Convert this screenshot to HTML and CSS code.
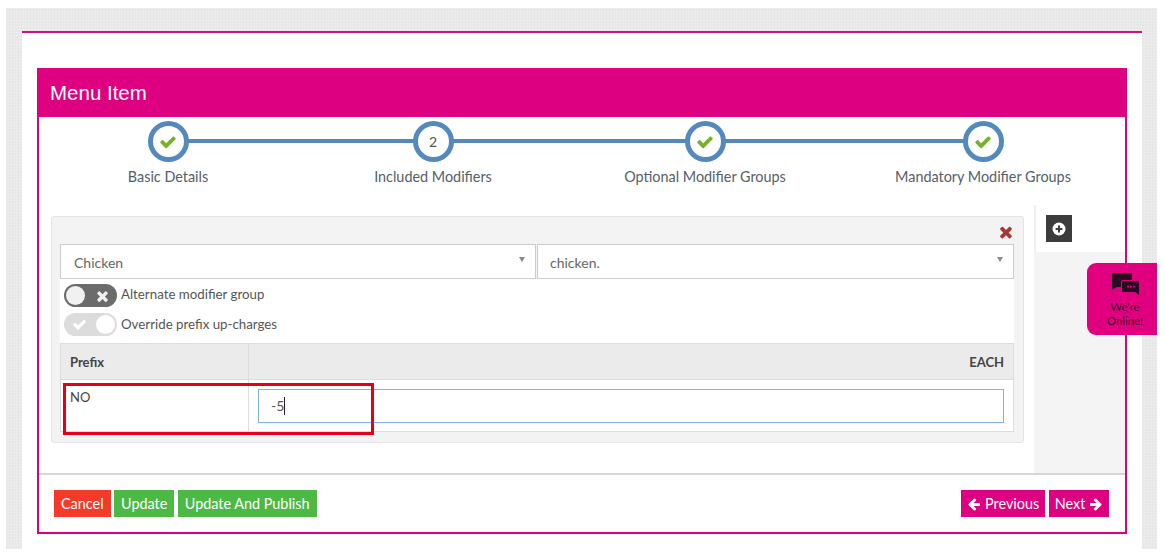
FILE: index.html
```html
<!DOCTYPE html>
<html lang="en">
<head>
<meta charset="utf-8">
<title>Menu Item</title>
<link rel="stylesheet" href="styles.css">
</head>
<body>
<div class="page">
  <div class="sheet">
    <section class="panel">
      <h1 class="panel-title">Menu Item</h1>
      <div class="stepper">
        <div class="step-line"></div>
        <div class="step">
          <div class="step-circle"><svg class="check" viewBox="0 0 1792 1792"><path d="M1671 566q0 40-28 68l-724 724-136 136q-28 28-68 28t-68-28l-136-136-362-362q-28-28-28-68t28-68l136-136q28-28 68-28t68 28l294 295 656-657q28-28 68-28t68 28l136 136q28 28 28 68z"/></svg></div>
          <div class="step-label">Basic Details</div>
        </div>
        <div class="step">
          <div class="step-circle">2</div>
          <div class="step-label">Included Modifiers</div>
        </div>
        <div class="step">
          <div class="step-circle"><svg class="check" viewBox="0 0 1792 1792"><path d="M1671 566q0 40-28 68l-724 724-136 136q-28 28-68 28t-68-28l-136-136-362-362q-28-28-28-68t28-68l136-136q28-28 68-28t68 28l294 295 656-657q28-28 68-28t68 28l136 136q28 28 28 68z"/></svg></div>
          <div class="step-label">Optional Modifier Groups</div>
        </div>
        <div class="step">
          <div class="step-circle"><svg class="check" viewBox="0 0 1792 1792"><path d="M1671 566q0 40-28 68l-724 724-136 136q-28 28-68 28t-68-28l-136-136-362-362q-28-28-28-68t28-68l136-136q28-28 68-28t68 28l294 295 656-657q28-28 68-28t68 28l136 136q28 28 28 68z"/></svg></div>
          <div class="step-label">Mandatory Modifier Groups</div>
        </div>
      </div>

      <div class="main">
        <div class="main-left">
          <div class="card">
            <div class="card-top">
              <svg class="close" viewBox="0 0 1408 1792"><path d="M1298 1322q0 40-28 68l-136 136q-28 28-68 28t-68-28l-294-294-294 294q-28 28-68 28t-68-28l-136-136q-28-28-28-68t28-68l294-294-294-294q-28-28-28-68t28-68l136-136q28-28 68-28t68 28l294 294 294-294q28-28 68-28t68 28l136 136q28 28 28 68t-28 68l-294 294 294 294q28 28 28 68z"/></svg>
            </div>
            <div class="selects">
              <div class="select select-first">Chicken<span class="caret-down"></span></div>
              <div class="select select-second">chicken.<span class="caret-down"></span></div>
            </div>
            <div class="card-body">
              <div class="toggle-row">
                <div class="toggle toggle-off">
                  <span class="knob"></span>
                  <svg class="toggle-x" viewBox="0 0 1408 1792"><path d="M1298 1322q0 40-28 68l-136 136q-28 28-68 28t-68-28l-294-294-294 294q-28 28-68 28t-68-28l-136-136q-28-28-28-68t28-68l294-294-294-294q-28-28-28-68t28-68l136-136q28-28 68-28t68 28l294 294 294-294q28-28 68-28t68 28l136 136q28 28 28 68t-28 68l-294 294 294 294q28 28 28 68z"/></svg>
                </div>
                <span class="toggle-label">Alternate modifier group</span>
              </div>
              <div class="toggle-row">
                <div class="toggle toggle-on">
                  <svg class="toggle-check" viewBox="0 0 1792 1792"><path d="M1671 566q0 40-28 68l-724 724-136 136q-28 28-68 28t-68-28l-136-136-362-362q-28-28-28-68t28-68l136-136q28-28 68-28t68 28l294 295 656-657q28-28 68-28t68 28l136 136q28 28 28 68z"/></svg>
                  <span class="knob"></span>
                </div>
                <span class="toggle-label">Override prefix up-charges</span>
              </div>
              <div class="table">
                <div class="th th-prefix">Prefix</div>
                <div class="th th-each">EACH</div>
                <div class="td td-prefix">NO</div>
                <div class="td td-value">
                  <div class="value-input">-5<span class="text-caret"></span></div>
                </div>
                <div class="annotation"></div>
              </div>
            </div>
          </div>
        </div>
        <aside class="side">
          <div class="side-top">
            <button class="add-btn" type="button" aria-label="Add">
              <svg viewBox="0 0 14 14"><circle cx="7" cy="7" r="6.5" fill="#fff"/><path d="M7 3.6v6.8M3.6 7h6.8" stroke="#3c3c3c" stroke-width="2"/></svg>
            </button>
          </div>
          <div class="side-fill"></div>
        </aside>
      </div>

      <div class="footer">
        <div class="btn-group">
          <button class="btn btn-red" type="button">Cancel</button>
          <button class="btn btn-green" type="button">Update</button>
          <button class="btn btn-green" type="button">Update And Publish</button>
        </div>
        <div class="btn-group">
          <button class="btn btn-pink" type="button"><svg class="arrow" viewBox="0 0 1792 1792"><path d="M1664 896v128q0 53-32.5 90.5t-84.5 37.5h-704l293 294q38 36 38 90t-38 90l-75 76q-37 37-90 37-52 0-91-37l-651-652q-37-37-37-90 0-52 37-91l651-650q38-38 91-38 52 0 90 38l75 74q38 38 38 91t-38 91l-293 293h704q52 0 84.5 37.5t32.5 90.5z"/></svg> Previous</button>
          <button class="btn btn-pink" type="button">Next <svg class="arrow" viewBox="0 0 1792 1792"><path d="M1600 960q0 54-37 91l-651 651q-39 37-91 37-51 0-90-37l-75-75q-38-38-38-91t38-91l293-293h-704q-52 0-84.5-37.5t-32.5-90.5v-128q0-53 32.5-90.5t84.5-37.5h704l-293-294q-38-36-38-90t38-90l75-75q38-38 90-38 53 0 91 38l651 651q37 35 37 90z"/></svg></button>
        </div>
      </div>
    </section>
  </div>
  <div class="chat">
    <svg class="chat-icon" viewBox="0 0 27 22"><path d="M1 0h18a1 1 0 0 1 1 1v6h-9a2 2 0 0 0-2 2v5H5l-5 3V1a1 1 0 0 1 1-1z" fill="#2b0b22"/><path d="M11 8h15a1 1 0 0 1 1 1v13l-4-3H11a1 1 0 0 1-1-1V9a1 1 0 0 1 1-1z" fill="#2b0b22"/><path d="M15 13.5h2M18 13.5h2M21 13.5h2" stroke="#e0007f" stroke-width="1.4"/></svg>
    <div class="chat-text">We're<br>Online!</div>
  </div>
</div>
</body>
</html>
```

FILE: styles.css
```css
* { box-sizing: border-box; }
html, body { margin: 0; padding: 0; background: #fff; }
body { font-family: Lato, "Liberation Sans", sans-serif; color: #555; overflow: hidden; height: 557px; }

.page {
  position: relative;
  margin: 8px 0 0 6px;
  width: 1151px;
  height: 541px;
  padding: 23px 15px 0 16px;
  background-color: #e9e9e9;
  background-image:
    repeating-linear-gradient(0deg, rgba(255,255,255,.2) 0 1px, transparent 1px 3px),
    repeating-linear-gradient(90deg, rgba(0,0,0,.015) 0 1px, transparent 1px 3px);
}
.sheet {
  height: 526px;
  background: #fff;
  border-top: 2px solid #d0107f;
  padding: 35px 15px 0;
}
.panel {
  height: 466px;
  border: 2px solid #e0007f;
  display: flex;
  flex-direction: column;
}
.panel-title {
  margin: -2px -2px 0;
  height: 49px;
  padding: 1px 0 0 13px;
  background: #dd0080;
  color: #fff;
  font: 400 20.5px/47px "Liberation Sans", Arial, sans-serif;
  flex: none;
}

.stepper {
  position: relative;
  flex: none;
  height: 88px;
  padding-top: 4px;
  display: grid;
  grid-template-columns: 258px 272px 272px 284px;
  align-items: start;
}
.step-line {
  position: absolute;
  left: 129px;
  top: 22px;
  width: 814px;
  height: 4px;
  background: #5389bd;
}
.step { position: relative; display: flex; flex-direction: column; align-items: center; }
.step-circle {
  width: 41px;
  height: 41px;
  border: 5px solid #5389bd;
  border-radius: 50%;
  background: #fff;
  display: flex;
  align-items: center;
  justify-content: center;
  font-size: 14px;
  color: #555;
}
.check { width: 18px; height: 18px; fill: #76b12c; }
.step-label { margin-top: 5px; font-size: 14.4px; line-height: 20px; color: #555e6b; white-space: nowrap; }

.main { flex: none; height: 268px; display: flex; }
.main-left { flex: 1; padding: 11px 10px 0 12px; }
.card {
  height: 227px;
  background: #f3f3f3;
  border: 1px solid #e4e4e4;
  border-radius: 3px;
  padding: 0 9px 10px 8px;
  display: flex;
  flex-direction: column;
}
.card-top { height: 27px; flex: none; display: flex; justify-content: flex-end; align-items: flex-start; padding: 6px 1px 0 0; }
.close { width: 14px; height: 18px; fill: #a5393a; }
.selects { flex: none; display: flex; gap: 1px; height: 35px; }
.select {
  position: relative;
  flex: 1;
  background: #fff;
  border: 1px solid #ccc;
  font-size: 14px;
  line-height: 36px;
  padding-left: 13px;
  color: #666;
}
.select-first { flex: none; width: 476px; }
.select-second { padding-left: 12px; }
.caret-down {
  position: absolute;
  right: 10px;
  top: 12px;
  border-left: 3.5px solid transparent;
  border-right: 3.5px solid transparent;
  border-top: 5px solid #888;
}
.card-body { flex: 1; background: #fff; display: flex; flex-direction: column; padding-top: 5px; }
.toggle-row { flex: none; display: flex; align-items: center; gap: 4px; height: 23px; margin-bottom: 6px; padding-left: 4px; }
.toggle {
  width: 53px;
  height: 23px;
  border-radius: 12px;
  display: flex;
  align-items: center;
  justify-content: space-between;
  padding: 2px;
}
.toggle-off { background: #6b6b6b; }
.toggle-on { background: #dcdcdc; }
.knob { width: 19px; height: 19px; border-radius: 50%; background: #fff; }
.toggle-off .knob { background: #f1f1f1; }
.toggle-x { width: 13px; height: 16px; fill: #f1f1f1; margin-right: 6px; }
.toggle-check { width: 15px; height: 15px; fill: #fff; margin-left: 6px; }
.toggle-label { margin-top: -2px; font-size: 13.3px; line-height: 18px; color: #555; white-space: nowrap; }
.toggle-row:first-child .toggle-label { margin-top: -4px; }

.table {
  position: relative;
  margin-top: 1px;
  flex: 1;
  display: grid;
  grid-template-columns: 188px 1fr;
  grid-template-rows: 36px 1fr;
  border: 1px solid #ddd;
}
.th {
  background: #ebebeb;
  font-size: 13px;
  font-weight: 700;
  line-height: 36px;
  color: #444;
  border-bottom: 1px solid #ddd;
}
.th-prefix { padding-left: 9px; border-right: 1px solid #ddd; }
.th-each { text-align: right; padding-right: 9px; }
.td-prefix { padding: 8px 0 0 9px; font-size: 13px; line-height: 18px; color: #444; border-right: 1px solid #ddd; }
.td-value { padding: 9px 9px 0 9px; }
.value-input {
  height: 34px;
  border: 1px solid #7ab5ec;
  padding-left: 12px;
  font-size: 14px;
  line-height: 31px;
  color: #555;
}
.text-caret { display: inline-block; width: 1px; height: 18px; background: #222; vertical-align: -4px; }
.annotation {
  position: absolute;
  left: 2px;
  top: 39px;
  width: 311px;
  height: 52px;
  border: 3px solid #e2001a;
}

.side { flex: none; width: 91px; display: flex; flex-direction: column; border-left: 2px solid #efefef; }
.side-top { height: 47px; flex: none; background: #fff; padding: 10px 0 0 10px; }
.add-btn {
  width: 26px;
  height: 27px;
  padding: 0;
  border: 0;
  background: #3c3c3c;
  display: flex;
  align-items: center;
  justify-content: center;
}
.add-btn svg { width: 14px; height: 14px; }
.side-fill { flex: 1; background: #f4f4f4; margin-left: -2px; }

.footer {
  flex: 1;
  border-top: 2px solid #d6d6d6;
  padding: 15px 16px 0 15px;
  display: flex;
  justify-content: space-between;
  align-items: flex-start;
}
.btn-group { display: flex; gap: 3.5px; }
.btn {
  height: 27px;
  padding: 0 7px;
  border: 0;
  font-family: Lato, "Liberation Sans", sans-serif;
  font-size: 14.4px;
  line-height: 27px;
  color: #fff;
  white-space: nowrap;
}
.btn-red { background: #f53a29; }
.btn-green { background: #4cb944; }
.btn-pink { background: #dd0080; padding: 0 6px; }
.arrow { width: 14px; height: 14px; fill: #fff; vertical-align: -2px; }

.chat {
  position: absolute;
  left: 1081px;
  top: 255px;
  width: 70px;
  height: 72px;
  background: #e0007f;
  border-radius: 9px 0 0 9px;
  display: flex;
  flex-direction: column;
  align-items: center;
  padding: 10px 0 0 6px;
}
.chat-icon { width: 27px; height: 22px; flex: none; }
.chat-text { margin-top: 5px; font-size: 11.3px; line-height: 14px; text-align: center; color: #4a0a33; }
```
